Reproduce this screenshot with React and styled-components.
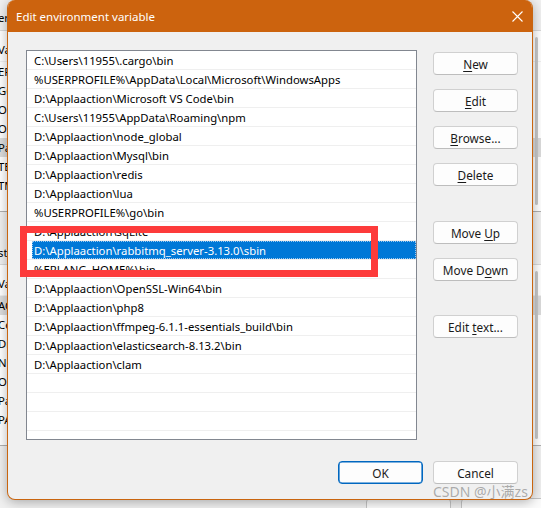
import React from "react";
import styled, { createGlobalStyle } from "styled-components";

const GlobalStyle = createGlobalStyle`
  html, body {
    margin: 0;
    padding: 0;
  }
  body {
    font-family: "Noto Sans", "Segoe UI", sans-serif;
  }
`;

const paths = [
    "C:\\Users\\11955\\.cargo\\bin",
    "%USERPROFILE%\\AppData\\Local\\Microsoft\\WindowsApps",
    "D:\\Applaaction\\Microsoft VS Code\\bin",
    "C:\\Users\\11955\\AppData\\Roaming\\npm",
    "D:\\Applaaction\\node_global",
    "D:\\Applaaction\\Mysql\\bin",
    "D:\\Applaaction\\redis",
    "D:\\Applaaction\\lua",
    "%USERPROFILE%\\go\\bin",
    "D:\\Applaaction\\sqLite",
    "D:\\Applaaction\\rabbitmq_server-3.13.0\\sbin",
    "%ERLANG_HOME%\\bin",
    "D:\\Applaaction\\OpenSSL-Win64\\bin",
    "D:\\Applaaction\\php8",
    "D:\\Applaaction\\ffmpeg-6.1.1-essentials_build\\bin",
    "D:\\Applaaction\\elasticsearch-8.13.2\\bin",
    "D:\\Applaaction\\clam",
    "",
    "",
    "",
    "",
];
const SELECTED = 10;

const userVars = ["ERLANG_HOME", "GOPATH", "OneDrive", "OneDriveConsumer", "Path", "TEMP", "TMP"];
const systemVars = ["ACSvcPort", "ComSpec", "DriverData", "NUMBER_OF_PROCESSORS", "OS", "Path", "PATHEXT"];

const Key = ({ children }) => <u>{children}</u>;

// the window behind the dialog: only a 7px strip of its first column shows
const BackList = ({ items, marked }) => (
    <BackTable>
        <BackHead>
            <BackName>Variable</BackName>
        </BackHead>
        {items.map((v, i) => (
            <BackRow key={v} $marked={i === marked}>
                <BackName>{v}</BackName>
            </BackRow>
        ))}
        <BackScroll />
    </BackTable>
);

const App = () => {
    return (
        <>
            <GlobalStyle />
            <Desktop>
                <BackWindow>
                    <BackLabel>
                        <BackName>er variables for 11955</BackName>
                    </BackLabel>
                    <BackList items={userVars} marked={4} />
                    <BackLabel $tall>
                        <BackName>stem variables</BackName>
                    </BackLabel>
                    <BackList items={systemVars} marked={0} />
                    <BackFooter>
                        <BackButton />
                        <BackButton />
                    </BackFooter>
                </BackWindow>

                <Dialog>
                    <TitleBar>
                        <Title>Edit environment variable</Title>
                        <CloseBtn>
                            <svg width="11" height="11" viewBox="0 0 11 11">
                                <path d="M0.5 0.5 L10.5 10.5 M10.5 0.5 L0.5 10.5" stroke="#fff" strokeWidth="1.1" />
                            </svg>
                        </CloseBtn>
                    </TitleBar>
                    <Body>
                        <Main>
                            <PathList>
                                {paths.map((p, i) => (
                                    <Row key={i}>
                                        <Cell $selected={i === SELECTED}>{p}</Cell>
                                    </Row>
                                ))}
                            </PathList>
                            <Side>
                                <Button><span><Key>N</Key>ew</span></Button>
                                <Button><span><Key>E</Key>dit</span></Button>
                                <Button><span><Key>B</Key>rowse...</span></Button>
                                <Button><span><Key>D</Key>elete</span></Button>
                                <Spacer $h={21} />
                                <Button><span>Move <Key>U</Key>p</span></Button>
                                <Button><span>Move D<Key>o</Key>wn</span></Button>
                                <Spacer $h={20} />
                                <Button><span>Edit <Key>t</Key>ext...</span></Button>
                            </Side>
                        </Main>
                        <Footer>
                            <Button $primary><span>OK</span></Button>
                            <Button><span>Cancel</span></Button>
                        </Footer>
                    </Body>
                </Dialog>

                <Highlight />
                <Watermark>CSDN @小满zs</Watermark>
            </Desktop>
        </>
    );
};

export default App;

const Desktop = styled.div`
    position: relative;
    width: 541px;
    height: 508px;
    overflow: hidden;
    background: #f0f0f0;
    font-size: 11.3px;
    color: #000;
`;

const BackWindow = styled.div`
    display: flex;
    flex-direction: column;
    height: 100%;
`;

const BackName = styled.span`
    display: block;
    width: 7px;
    overflow: hidden;
    white-space: nowrap;
    text-indent: -2px;
`;

const BackLabel = styled.div`
    height: ${(p) => (p.$tall ? "52px" : "30px")};
    display: flex;
    align-items: flex-end;
    padding-bottom: ${(p) => (p.$tall ? "3px" : "4px")};
    box-sizing: border-box;
    line-height: 16px;
`;

const BackTable = styled.div`
    position: relative;
    background: #fff;
    border-top: 1px solid #d9d9d9;
    border-bottom: 1px solid #b0b0b0;
    padding-bottom: 16px;
`;

const BackHead = styled.div`
    height: 31px;
    display: flex;
    align-items: flex-end;
    padding-bottom: 4px;
    box-sizing: border-box;
    border-bottom: 1px solid #f0f0f0;
`;

const BackRow = styled.div`
    height: 19px;
    line-height: 19px;
    background: ${(p) => (p.$marked ? "#dcdcdc" : "transparent")};
`;

const BackScroll = styled.div`
    position: absolute;
    top: 6px;
    right: 3px;
    bottom: 6px;
    width: 3px;
    border-radius: 2px;
    background: #c8c8c8;
`;

const BackFooter = styled.div`
    margin-top: auto;
    display: flex;
    justify-content: flex-end;
    gap: 10px;
    margin-right: -5px;
    margin-bottom: -15px;
`;

const BackButton = styled.div`
    width: 83px;
    height: 23px;
    border: 1px solid #c4c4c4;
    border-radius: 4px;
    background: #fbfbfb;
`;

const Dialog = styled.div`
    position: absolute;
    left: 7px;
    top: 0;
    width: 526px;
    height: 500px;
    box-sizing: border-box;
    display: flex;
    flex-direction: column;
    background: #f0f0f0;
    border: 1px solid #c9650f;
    border-top: none;
    border-radius: 8px;
    overflow: hidden;
    box-shadow: 0 2px 12px rgba(0, 0, 0, 0.3);
`;

const TitleBar = styled.div`
    height: 32px;
    flex-shrink: 0;
    display: flex;
    align-items: center;
    justify-content: space-between;
    background: #cc630e;
    padding-left: 9px;
    margin: 0 -1px;
`;

const Title = styled.span`
    color: #fff;
    font-size: 11.5px;
`;

const CloseBtn = styled.div`
    width: 30px;
    height: 32px;
    display: flex;
    align-items: center;
    justify-content: center;
    margin-right: 1px;
`;

const Body = styled.div`
    flex: 1;
    display: flex;
    flex-direction: column;
    padding: 18px 14px 16px 18px;
`;

const Main = styled.div`
    display: flex;
    align-items: flex-start;
    gap: 16px;
`;

const PathList = styled.div`
    width: 391px;
    height: 390px;
    box-sizing: border-box;
    border: 1px solid #828790;
    background: #fff;
    overflow: hidden;
`;

const Row = styled.div`
    height: 19px;
    box-sizing: border-box;
    border-bottom: 1px solid #efefef;
    padding-left: 5px;
    display: flex;
`;

const Cell = styled.div`
    flex: 1;
    height: 18px;
    line-height: 18px;
    padding: 1px 0 0 2px;
    white-space: nowrap;
    box-sizing: border-box;
    background: ${(p) => (p.$selected ? "#0078d7" : "transparent")};
    color: ${(p) => (p.$selected ? "#fff" : "#000")};
    outline: ${(p) => (p.$selected ? "1px dotted #9cc9f0" : "none")};
    outline-offset: -1px;
`;

const Side = styled.div`
    width: 85px;
    padding-top: 2px;
    display: flex;
    flex-direction: column;
    gap: 14px;
`;

const Spacer = styled.div`
    height: ${(p) => p.$h}px;
    margin: -7px 0;
`;

const Button = styled.div`
    width: 85px;
    height: 23px;
    box-sizing: border-box;
    display: flex;
    align-items: center;
    justify-content: center;
    border: 1px solid ${(p) => (p.$primary ? "#0067c0" : "#d0d0d0")};
    border-bottom-color: ${(p) => (p.$primary ? "#0067c0" : "#bdbdbd")};
    box-shadow: ${(p) => (p.$primary ? "inset 0 0 0 0.6px #0067c0" : "none")};
    border-radius: 4px;
    background: #fdfdfd;
    font-size: 11.8px;
    color: #1a1a1a;
    white-space: nowrap;

    u {
        text-underline-offset: 2px;
    }
`;

const Footer = styled.div`
    margin-top: 21px;
    display: flex;
    justify-content: flex-end;
    gap: 10px;
`;

const Highlight = styled.div`
    position: absolute;
    left: 20px;
    top: 226px;
    width: 358px;
    height: 51px;
    box-sizing: border-box;
    border: 7px solid #fd3b3b;
`;

const Watermark = styled.div`
    position: absolute;
    left: 433px;
    top: 481px;
    font-family: "Noto Sans", "Noto Sans CJK SC", sans-serif;
    font-size: 14px;
    color: rgba(110, 110, 110, 0.55);
    white-space: nowrap;
`;
